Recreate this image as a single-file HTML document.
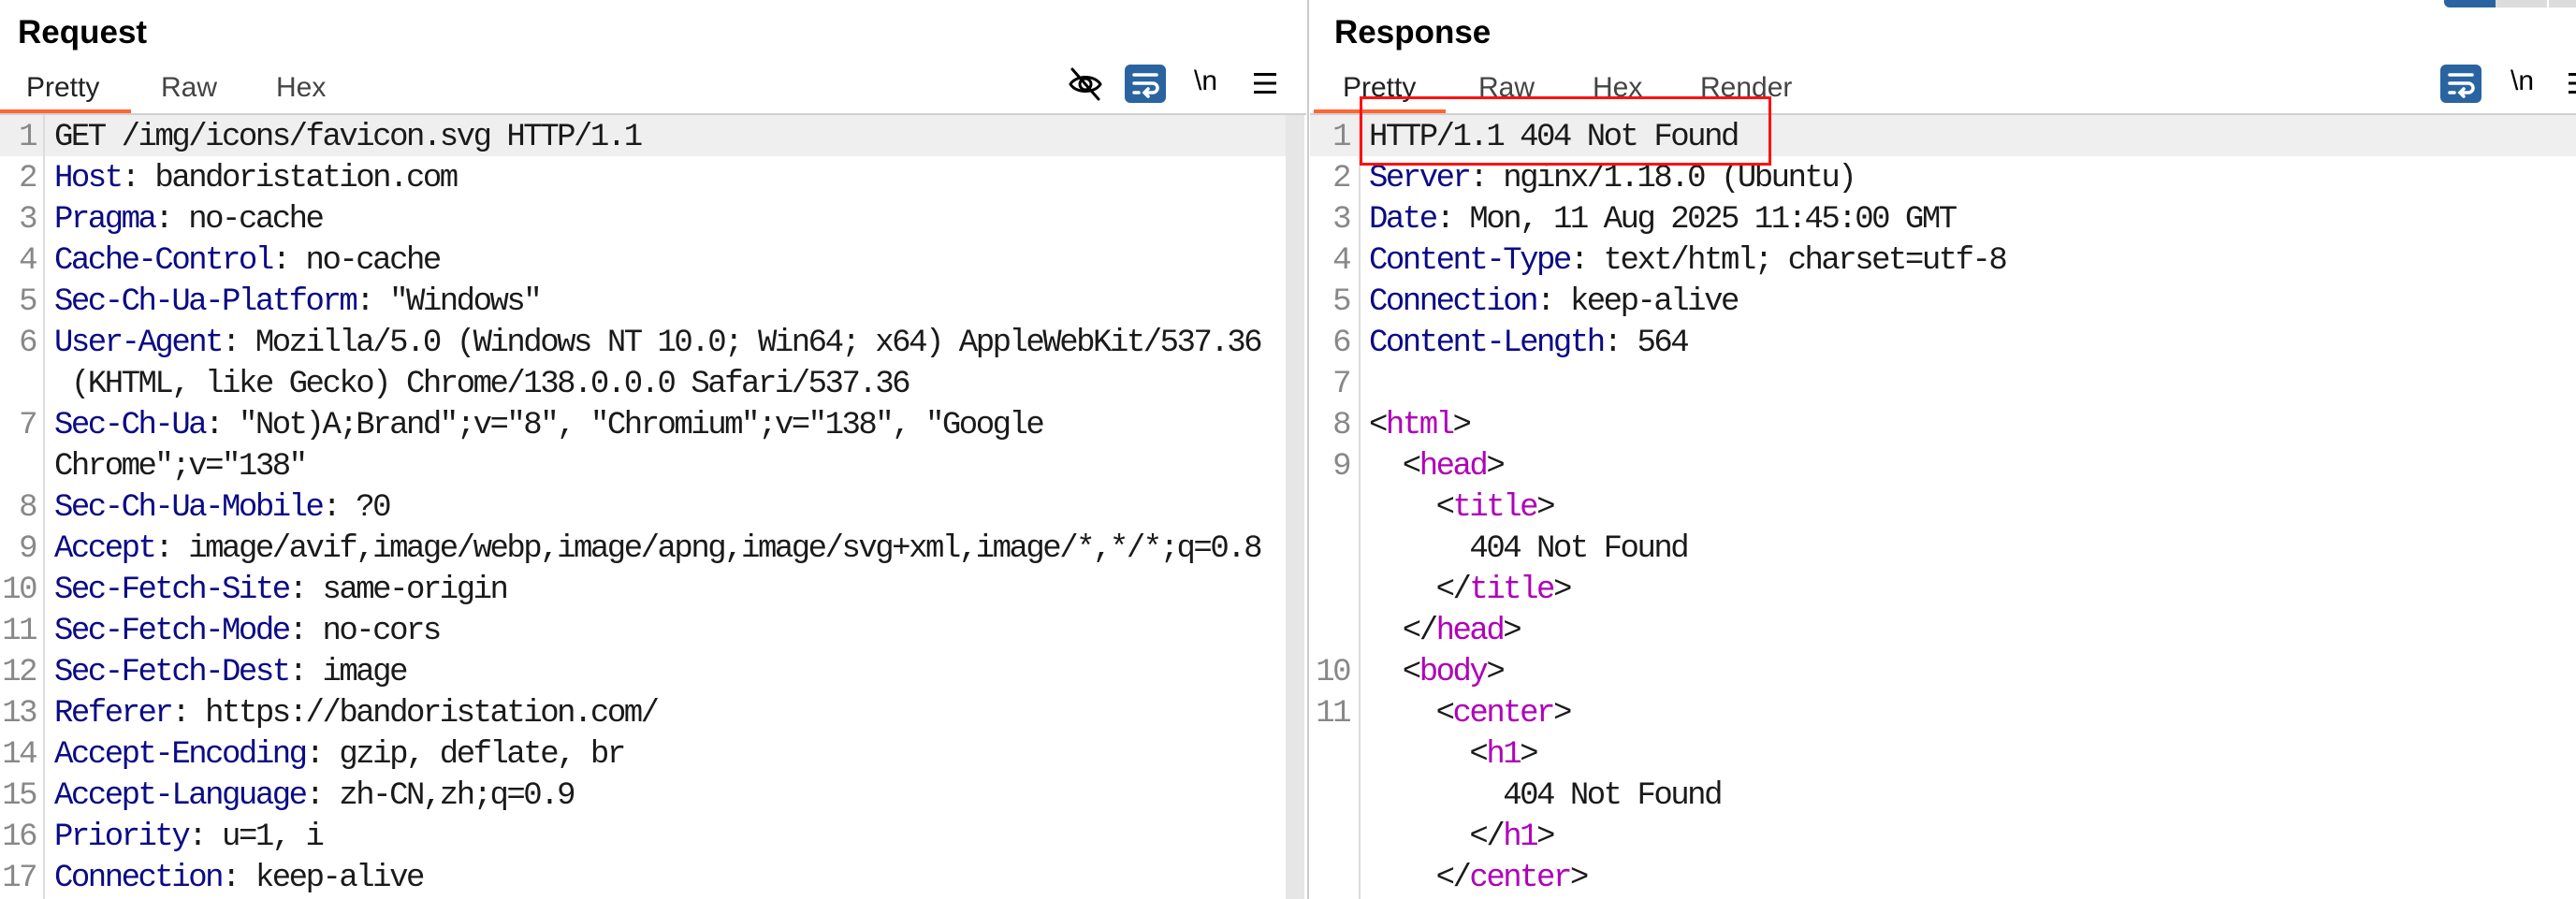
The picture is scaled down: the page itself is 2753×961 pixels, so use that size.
<!DOCTYPE html>
<html><head><meta charset="utf-8"><style>
html,body{margin:0;padding:0;width:2753px;height:961px;overflow:hidden;background:#fff;position:relative}
.a{position:absolute}
.title{font-family:"Liberation Sans",sans-serif;font-weight:bold;font-size:35px;color:#000;top:15px}
.tab{font-family:"Liberation Sans",sans-serif;font-size:30px;color:#444;top:77px}
.tab.act{color:#222}
.row{position:absolute;height:44px;line-height:44px;font-family:"Liberation Mono",monospace;font-size:34px;letter-spacing:-2.5px;white-space:pre;color:#1a1a1a;padding-top:2px;box-sizing:border-box}
.n{color:#888;text-align:right}
.k{color:#0b0b86}
.t{color:#b000b8}
</style></head><body>
<div class="a" style="left:2612px;top:0;width:55px;height:8px;background:#2a64a0;border-radius:0 0 0 6px"></div>
<div class="a" style="left:2667px;top:0;width:55px;height:8px;background:#dcdcdc"></div>
<div class="a" style="left:2724px;top:0;width:29px;height:8px;background:#dcdcdc"></div>

<div class="a title" style="left:19px">Request</div>
<div class="a tab act" style="left:28px">Pretty</div>
<div class="a tab" style="left:172px">Raw</div>
<div class="a tab" style="left:295px">Hex</div>
<div class="a" style="left:0;top:117px;width:140px;height:4px;background:#ff6633"></div>
<div class="a" style="left:0;top:121px;width:1396px;height:2px;background:#cfd1d1"></div>
<div class="a" style="left:0;top:123px;width:1374px;height:44px;background:#efefef"></div>
<div class="a" style="left:1374px;top:123px;width:20px;height:838px;background:#e6e6e6"></div>
<div class="a" style="left:46px;top:123px;width:2px;height:838px;background:#dcdcdc"></div>
<div class="a" style="left:1397px;top:0;width:2px;height:961px;background:#cacaca"></div>

<svg class="a" style="left:1141px;top:71px" width="38" height="38" viewBox="0 0 38 38" fill="none" stroke="#000" stroke-width="3" stroke-linecap="round">
<path d="M3 19 C9 9 29 9 35 19 C29 29 9 29 3 19Z"/><circle cx="19" cy="19" r="6"/><path d="M5 3 L33 35"/></svg>
<div class="a" style="left:1202px;top:69px;width:44px;height:41px;background:#2a64a0;border-radius:6px"></div>
<svg class="a" style="left:1202px;top:69px" width="44" height="41" viewBox="0 0 44 41" fill="none" stroke="#fff" stroke-width="3.5" stroke-linecap="round">
<path d="M10 11 H34"/><path d="M10 20 H30 a5 5 0 0 1 0 10 H22"/><path d="M25 26 L21 30 L25 34"/><path d="M10 30 H15"/></svg>
<div class="a" style="left:1276px;top:70px;font-family:'Liberation Sans',sans-serif;font-size:30px;color:#000">\n</div>
<svg class="a" style="left:1340px;top:78px" width="24" height="22"><rect x="0" y="0" width="24" height="3" fill="#000"/><rect x="0" y="9.5" width="24" height="3" fill="#000"/><rect x="0" y="19" width="24" height="3" fill="#000"/></svg>

<div class="row n" style="left:0;width:38px;top:123px">1</div>
<div class="row" style="left:58px;top:123px">GET /img/icons/favicon.svg HTTP/1.1</div>
<div class="row n" style="left:0;width:38px;top:167px">2</div>
<div class="row" style="left:58px;top:167px"><span class="k">Host</span>: bandoristation.com</div>
<div class="row n" style="left:0;width:38px;top:211px">3</div>
<div class="row" style="left:58px;top:211px"><span class="k">Pragma</span>: no-cache</div>
<div class="row n" style="left:0;width:38px;top:255px">4</div>
<div class="row" style="left:58px;top:255px"><span class="k">Cache-Control</span>: no-cache</div>
<div class="row n" style="left:0;width:38px;top:299px">5</div>
<div class="row" style="left:58px;top:299px"><span class="k">Sec-Ch-Ua-Platform</span>: "Windows"</div>
<div class="row n" style="left:0;width:38px;top:343px">6</div>
<div class="row" style="left:58px;top:343px"><span class="k">User-Agent</span>: Mozilla/5.0 (Windows NT 10.0; Win64; x64) AppleWebKit/537.36</div>
<div class="row" style="left:58px;top:387px"> (KHTML, like Gecko) Chrome/138.0.0.0 Safari/537.36</div>
<div class="row n" style="left:0;width:38px;top:431px">7</div>
<div class="row" style="left:58px;top:431px"><span class="k">Sec-Ch-Ua</span>: "Not)A;Brand";v="8", "Chromium";v="138", "Google</div>
<div class="row" style="left:58px;top:475px">Chrome";v="138"</div>
<div class="row n" style="left:0;width:38px;top:519px">8</div>
<div class="row" style="left:58px;top:519px"><span class="k">Sec-Ch-Ua-Mobile</span>: ?0</div>
<div class="row n" style="left:0;width:38px;top:563px">9</div>
<div class="row" style="left:58px;top:563px"><span class="k">Accept</span>: image/avif,image/webp,image/apng,image/svg+xml,image/*,*/*;q=0.8</div>
<div class="row n" style="left:0;width:38px;top:607px">10</div>
<div class="row" style="left:58px;top:607px"><span class="k">Sec-Fetch-Site</span>: same-origin</div>
<div class="row n" style="left:0;width:38px;top:651px">11</div>
<div class="row" style="left:58px;top:651px"><span class="k">Sec-Fetch-Mode</span>: no-cors</div>
<div class="row n" style="left:0;width:38px;top:695px">12</div>
<div class="row" style="left:58px;top:695px"><span class="k">Sec-Fetch-Dest</span>: image</div>
<div class="row n" style="left:0;width:38px;top:739px">13</div>
<div class="row" style="left:58px;top:739px"><span class="k">Referer</span>: https://bandoristation.com/</div>
<div class="row n" style="left:0;width:38px;top:783px">14</div>
<div class="row" style="left:58px;top:783px"><span class="k">Accept-Encoding</span>: gzip, deflate, br</div>
<div class="row n" style="left:0;width:38px;top:827px">15</div>
<div class="row" style="left:58px;top:827px"><span class="k">Accept-Language</span>: zh-CN,zh;q=0.9</div>
<div class="row n" style="left:0;width:38px;top:871px">16</div>
<div class="row" style="left:58px;top:871px"><span class="k">Priority</span>: u=1, i</div>
<div class="row n" style="left:0;width:38px;top:915px">17</div>
<div class="row" style="left:58px;top:915px"><span class="k">Connection</span>: keep-alive</div>

<div class="a title" style="left:1426px">Response</div>
<div class="a tab act" style="left:1435px">Pretty</div>
<div class="a tab" style="left:1580px">Raw</div>
<div class="a tab" style="left:1702px">Hex</div>
<div class="a tab" style="left:1817px">Render</div>
<div class="a" style="left:1404px;top:117px;width:141px;height:4px;background:#ff6633"></div>
<div class="a" style="left:1400px;top:121px;width:1353px;height:2px;background:#cfd1d1"></div>
<div class="a" style="left:1400px;top:123px;width:1353px;height:44px;background:#efefef"></div>
<div class="a" style="left:1452px;top:123px;width:2px;height:838px;background:#dcdcdc"></div>

<div class="a" style="left:2608px;top:69px;width:44px;height:41px;background:#2a64a0;border-radius:6px"></div>
<svg class="a" style="left:2608px;top:69px" width="44" height="41" viewBox="0 0 44 41" fill="none" stroke="#fff" stroke-width="3.5" stroke-linecap="round">
<path d="M10 11 H34"/><path d="M10 20 H30 a5 5 0 0 1 0 10 H22"/><path d="M25 26 L21 30 L25 34"/><path d="M10 30 H15"/></svg>
<div class="a" style="left:2683px;top:70px;font-family:'Liberation Sans',sans-serif;font-size:30px;color:#000">\n</div>
<svg class="a" style="left:2745px;top:78px" width="24" height="22"><rect x="0" y="0" width="24" height="3" fill="#000"/><rect x="0" y="9.5" width="24" height="3" fill="#000"/><rect x="0" y="19" width="24" height="3" fill="#000"/></svg>

<div class="row n" style="left:1400px;width:42px;top:123px">1</div>
<div class="row" style="left:1463px;top:123px">HTTP/1.1 404 Not Found</div>
<div class="row n" style="left:1400px;width:42px;top:167px">2</div>
<div class="row" style="left:1463px;top:167px"><span class="k">Server</span>: nginx/1.18.0 (Ubuntu)</div>
<div class="row n" style="left:1400px;width:42px;top:211px">3</div>
<div class="row" style="left:1463px;top:211px"><span class="k">Date</span>: Mon, 11 Aug 2025 11:45:00 GMT</div>
<div class="row n" style="left:1400px;width:42px;top:255px">4</div>
<div class="row" style="left:1463px;top:255px"><span class="k">Content-Type</span>: text/html; charset=utf-8</div>
<div class="row n" style="left:1400px;width:42px;top:299px">5</div>
<div class="row" style="left:1463px;top:299px"><span class="k">Connection</span>: keep-alive</div>
<div class="row n" style="left:1400px;width:42px;top:343px">6</div>
<div class="row" style="left:1463px;top:343px"><span class="k">Content-Length</span>: 564</div>
<div class="row n" style="left:1400px;width:42px;top:387px">7</div>
<div class="row n" style="left:1400px;width:42px;top:431px">8</div>
<div class="row" style="left:1463px;top:431px">&lt;<span class="t">html</span>&gt;</div>
<div class="row n" style="left:1400px;width:42px;top:475px">9</div>
<div class="row" style="left:1463px;top:475px">  &lt;<span class="t">head</span>&gt;</div>
<div class="row" style="left:1463px;top:519px">    &lt;<span class="t">title</span>&gt;</div>
<div class="row" style="left:1463px;top:563px">      404 Not Found</div>
<div class="row" style="left:1463px;top:607px">    &lt;/<span class="t">title</span>&gt;</div>
<div class="row" style="left:1463px;top:651px">  &lt;/<span class="t">head</span>&gt;</div>
<div class="row n" style="left:1400px;width:42px;top:695px">10</div>
<div class="row" style="left:1463px;top:695px">  &lt;<span class="t">body</span>&gt;</div>
<div class="row n" style="left:1400px;width:42px;top:739px">11</div>
<div class="row" style="left:1463px;top:739px">    &lt;<span class="t">center</span>&gt;</div>
<div class="row" style="left:1463px;top:783px">      &lt;<span class="t">h1</span>&gt;</div>
<div class="row" style="left:1463px;top:827px">        404 Not Found</div>
<div class="row" style="left:1463px;top:871px">      &lt;/<span class="t">h1</span>&gt;</div>
<div class="row" style="left:1463px;top:915px">    &lt;/<span class="t">center</span>&gt;</div>

<div class="a" style="left:1453px;top:103px;width:440px;height:74px;border:3px solid #ff1010;box-sizing:border-box"></div>
</body></html>
